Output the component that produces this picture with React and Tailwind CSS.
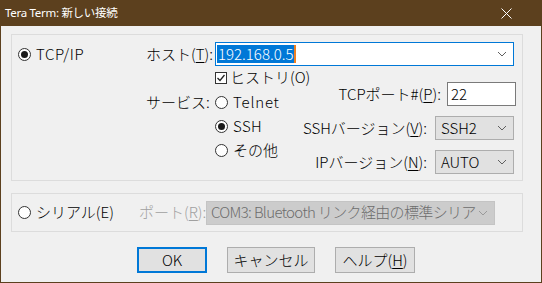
import React from "react";

const FONT = { fontFamily: '"Noto Sans CJK JP", sans-serif' };

function Radio({ checked }) {
  return (
    <span className="relative inline-flex h-[13px] w-[13px] shrink-0 items-center justify-center rounded-full border border-[#333333] bg-white">
      {checked && <span className="h-[7px] w-[7px] rounded-full bg-[#1a1a1a]" />}
    </span>
  );
}

function Chevron({ color = "#606060" }) {
  return (
    <svg width="10" height="6" viewBox="0 0 10 6" className="shrink-0">
      <polyline points="1,1 5,5 9,1" fill="none" stroke={color} strokeWidth="1" />
    </svg>
  );
}

function Select({ value }) {
  return (
    <div className="flex h-[24px] w-[79px] shrink-0 items-center justify-between border border-[#adadad] bg-[#e1e1e1] pl-[5px] pr-[6px]">
      <span>{value}</span>
      <Chevron />
    </div>
  );
}

function U({ children }) {
  return <span className="underline underline-offset-2">{children}</span>;
}

export default function App() {
  return (
    <div className="flex h-[283px] w-[542px] flex-col bg-[#5c401e] text-[15px] font-light text-black" style={FONT}>
      {/* title bar */}
      <div className="flex h-[26px] shrink-0 items-center justify-between pl-[5px] pr-[30px] text-white">
        <span className="text-[11.5px] font-normal tracking-[-0.3px]" style={{ fontFamily: '"Noto Sans", "Noto Sans CJK JP", sans-serif' }}>
          Tera Term: 新しい接続
        </span>
        <svg width="11" height="11" viewBox="0 0 11 11">
          <path d="M0.5 0.5 L10.5 10.5 M10.5 0.5 L0.5 10.5" stroke="#ffffff" strokeWidth="1" />
        </svg>
      </div>

      {/* body */}
      <div className="mx-[1px] mb-[1px] flex flex-1 flex-col bg-[#f0f0f0] pl-[10px] pt-[8px]">
        {/* TCP/IP group */}
        <div className="flex h-[147px] w-[512px] border border-[#dcdcdc]">
          <div className="w-[134px] shrink-0 pt-[7px]">
            <div className="flex h-[24px] items-center gap-[5px] pl-[6px]">
              <Radio checked />
              <span className="tracking-[0.6px]">TCP/IP</span>
            </div>
          </div>
          <div className="flex min-w-0 flex-1 flex-col pt-[7px]">
            {/* host row */}
            <div className="flex h-[24px] items-center">
              <span className="w-[69px] shrink-0 whitespace-nowrap">
                ホスト(<U>T</U>):
              </span>
              <div className="flex h-[24px] w-[299px] shrink-0 items-center justify-between border border-[#0078d7] bg-white pl-[1px] pr-[6px]">
                <span className="flex items-center">
                  <span className="bg-[#0078d7] px-[1px] leading-[18px] text-white">192.168.0.5</span>
                  <span className="h-[18px] w-[2px] bg-[#f08020]" />
                </span>
                <Chevron />
              </div>
            </div>
            <div className="flex">
              {/* left: history + services */}
              <div className="flex w-[150px] shrink-0 flex-col">
                <div className="mt-[5px] flex h-[13px] items-center gap-[3px] pl-[69px]">
                  <span className="flex h-[12px] w-[12px] shrink-0 items-center justify-center border border-[#333333] bg-white">
                    <svg width="10" height="10" viewBox="0 0 10 10">
                      <polyline points="1.5,5 4,7.5 8.5,2" fill="none" stroke="#222222" strokeWidth="1.3" />
                    </svg>
                  </span>
                  <span className="whitespace-nowrap">ヒストリ(O)</span>
                </div>
                <div className="mt-[6px] flex">
                  <div className="flex h-[24px] w-[69px] shrink-0 items-center whitespace-nowrap">サービス:</div>
                  <div className="flex flex-col">
                    <div className="flex h-[24px] items-center gap-[5px]">
                      <Radio />
                      <span className="tracking-[0.8px]">Telnet</span>
                    </div>
                    <div className="flex h-[24px] items-center gap-[5px]">
                      <Radio checked />
                      <span className="tracking-[0.4px]">SSH</span>
                    </div>
                    <div className="flex h-[24px] items-center gap-[5px] whitespace-nowrap">
                      <Radio />
                      <span>その他</span>
                    </div>
                  </div>
                </div>
              </div>
              {/* right: port and versions */}
              <div className="flex min-w-0 flex-1 flex-col items-end">
                <div className="mr-[6px] mt-[16px] flex h-[24px] items-center gap-[6px]">
                  <span className="whitespace-nowrap">
                    TCPポート#(<U>P</U>):
                  </span>
                  <div className="flex h-[24px] w-[69px] shrink-0 items-center border border-[#7a7a7a] bg-white pl-[3px]">22</div>
                </div>
                <div className="mr-[8px] mt-[10px] flex h-[24px] items-center gap-[8px]">
                  <span className="whitespace-nowrap">
                    SSHバージョン(<U>V</U>):
                  </span>
                  <Select value="SSH2" />
                </div>
                <div className="mr-[8px] mt-[10px] flex h-[24px] items-center gap-[8px]">
                  <span className="whitespace-nowrap">
                    IPバージョン(<U>N</U>):
                  </span>
                  <Select value="AUTO" />
                </div>
              </div>
            </div>
          </div>
        </div>

        {/* serial group */}
        <div className="mt-[12px] flex h-[39px] w-[512px] items-center border border-[#dcdcdc]">
          <div className="flex w-[127px] shrink-0 items-center gap-[5px] pl-[6px]">
            <Radio />
            <span className="whitespace-nowrap">シリアル(E)</span>
          </div>
          <span className="w-[67px] shrink-0 whitespace-nowrap text-[#a0a0a0]">
            ポート(<U>R</U>):
          </span>
          <div className="flex h-[24px] w-[289px] shrink-0 items-center justify-between border border-[#c4c4c4] bg-[#cccccc] pl-[4px] pr-[6px] text-[#6d6d6d]">
            <span className="whitespace-nowrap tracking-[-0.65px]">COM3: Bluetooth リンク経由の標準シリア</span>
            <Chevron color="#9a9a9a" />
          </div>
        </div>

        {/* buttons */}
        <div className="mt-[15px] flex pl-[126px]">
          <button className="flex h-[26px] w-[70px] items-center justify-center border-2 border-[#0078d7] bg-[#e1e1e1]">
            OK
          </button>
          <button className="ml-[20px] flex h-[26px] w-[88px] items-center justify-center border border-[#adadad] bg-[#e1e1e1]">
            キャンセル
          </button>
          <button className="ml-[20px] flex h-[26px] w-[80px] items-center justify-center border border-[#adadad] bg-[#e1e1e1]">
            ヘルプ(<U>H</U>)
          </button>
        </div>
      </div>
    </div>
  );
}
